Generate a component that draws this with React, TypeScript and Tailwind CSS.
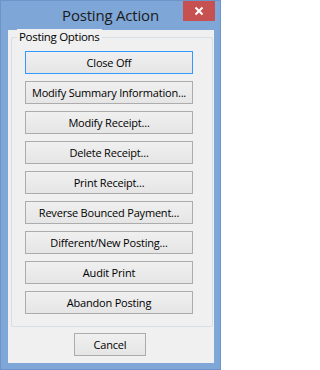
import React from "react";

const labels = [
  "Close Off",
  "Modify Summary Information...",
  "Modify Receipt...",
  "Delete Receipt...",
  "Print Receipt...",
  "Reverse Bounced Payment...",
  "Different/New Posting...",
  "Audit Print",
  "Abandon Posting",
];

function WinButton({ label, focused, className }: { label: string; focused?: boolean; className?: string }) {
  return (
    <button
      className={
        "flex items-center justify-center h-[23px] border bg-gradient-to-b from-[#f0f0f0] to-[#e5e5e5] text-[11px] tracking-[-0.2px] whitespace-nowrap text-[#000] leading-none pb-[1px] " +
        (focused ? "border-[#3399ff] " : "border-[#acacac] ") +
        (className ?? "")
      }
      style={{ fontFamily: '"Open Sans", "Noto Sans", sans-serif' }}
    >
      {label}
    </button>
  );
}

export default function App() {
  return (
    <div
      className="relative w-[221px] h-[370px] bg-[#7ea6d7] border border-[#6f95c8] flex flex-col"
      style={{ fontFamily: '"Open Sans", "Noto Sans", sans-serif' }}
    >
      <div className="h-[29px] flex items-center justify-center text-[15px] tracking-[-0.2px] text-[#1b1b1b] pb-[1px]">
        Posting Action
      </div>
      <div className="absolute left-[182px] top-0 w-[32px] h-[20px] bg-[#c75050] flex items-center justify-center">
        <svg width="10" height="10" viewBox="0 0 10 10">
          <path d="M1.5 1.5 L8.5 8.5 M8.5 1.5 L1.5 8.5" stroke="#ffffff" strokeWidth="2" />
        </svg>
      </div>
      <div className="ml-[7px] w-[206px] h-[333px] bg-[#f0f0f0] flex flex-col">
        <div className="relative ml-[3px] mt-[7px] w-[202px] h-[290px] border border-[#d5dfe5] rounded-[2px] flex flex-col items-start pl-[13px] pt-[13px] gap-[7px]">
          <div className="absolute left-[5px] top-[-9px] px-[2px] bg-[#f0f0f0] text-[11.5px] tracking-[-0.3px] leading-[16px] text-[#000]">
            Posting Options
          </div>
          {labels.map((l, i) => (
            <WinButton key={l} label={l} focused={i === 0} className="w-[168px]" />
          ))}
        </div>
        <div className="flex pl-[66px] mt-[6px]">
          <WinButton label="Cancel" className="w-[72px]" />
        </div>
      </div>
    </div>
  );
}
